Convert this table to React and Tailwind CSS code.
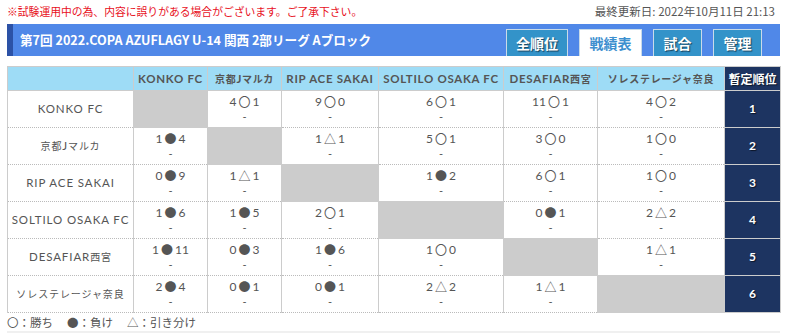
import React from "react";

const teams = [
  "KONKO FC",
  "京都Jマルカ",
  "RIP ACE SAKAI",
  "SOLTILO OSAKA FC",
  "DESAFIAR西宮",
  "ソレステレージャ奈良",
];

const results = [
  [null, "4〇1", "9〇0", "6〇1", "11〇1", "4〇2"],
  ["1●4", null, "1△1", "5〇1", "3〇0", "1〇0"],
  ["0●9", "1△1", null, "1●2", "6〇1", "1〇0"],
  ["1●6", "1●5", "2〇1", null, "0●1", "2△2"],
  ["1●11", "0●3", "1●6", "1〇0", null, "1△1"],
  ["2●4", "0●1", "0●1", "2△2", "1△1", null],
];

const widths = [126, 74, 74, 97, 125, 94, 127, 56];

const tableFont = { fontFamily: "Lato, 'Noto Sans CJK JP', sans-serif" };
const jpFont = { fontFamily: "'Noto Sans CJK JP', sans-serif" };

function Mixed({ text }) {
  const parts = text.split(/([\u3000-\u9fff\uff00-\uffef]+)/).filter(Boolean);
  return (
    <>
      {parts.map((p, i) =>
        /[\u3000-\u9fff\uff00-\uffef]/.test(p) ? (
          <span key={i} className="text-[10px]" style={jpFont}>{p}</span>
        ) : (
          <span key={i}>{p}</span>
        )
      )}
    </>
  );
}

function Score({ s }) {
  const m = s.match(/^(\d+)(.)(\d+)$/);
  return (
    <div className="flex flex-col items-center">
      <div className="flex items-center h-[14px] text-[12px] leading-[14px] text-[#555]">
        <span>{m[1]}</span>
        <span className="text-[12px] leading-[12px] mx-[2px]" style={jpFont}>{m[2]}</span>
        <span>{m[3]}</span>
      </div>
      <div className="mt-[2px] h-[12px] text-[11px] leading-[12px] text-[#555]">-</div>
    </div>
  );
}

const btn = "h-[27px] flex items-center justify-center border border-[#c9dbe8] border-b-0 font-bold text-[14px]";
const btnBlue = btn + " bg-[#3393c9] text-white [text-shadow:1px_1px_1px_rgba(0,0,0,0.55)]";

export default function App() {
  return (
    <div className="w-[790px] h-[333px] bg-white overflow-hidden" style={jpFont}>
      <div className="ml-[7px] w-[773px]">
        <div className="flex items-center justify-between h-[24px] pb-[1px]">
          <span className="text-[10.8px] text-[#e8101c]">※試験運用中の為、内容に誤りがある場合がございます。ご了承下さい。</span>
          <span className="text-[11.5px] text-[#555] pr-[5px]">最終更新日: 2022年10月11日 21:13</span>
        </div>
        <div className="flex items-end justify-between h-[32px] bg-[#5088e8] border-l-[6px] border-[#2c52a6] pr-[18px]">
          <div className="self-center pl-[7px] text-white font-bold text-[12.6px]">
            第7回 2022.COPA AZUFLAGY U-14 関西 2部リーグ Aブロック
          </div>
          <div className="flex gap-[11px]">
            <div className={btnBlue + " w-[62px]"}>全順位</div>
            <div className={btn + " w-[63px] bg-white text-[#3d8fcf]"}>戦績表</div>
            <div className={btnBlue + " w-[49px]"}>試合</div>
            <div className={btnBlue + " w-[49px]"}>管理</div>
          </div>
        </div>
        <table className="mt-[10px] w-[773px] table-fixed border-collapse" style={tableFont}>
          <colgroup>
            {widths.map((w, i) => (
              <col key={i} style={{ width: w }} />
            ))}
          </colgroup>
          <thead>
            <tr className="h-[24px]">
              <th className="bg-[#9edcf6] border border-[#cccccc]"></th>
              {teams.map((t) => (
                <th key={t} className="bg-[#9edcf6] border border-[#cccccc] text-[11.5px] font-bold text-[#555] tracking-[0.7px] whitespace-nowrap px-0">
                  <Mixed text={t} />
                </th>
              ))}
              <th className="bg-[#1d3461] border border-[#cccccc] text-[12px] font-bold text-white [text-shadow:1px_1px_1px_rgba(0,0,0,0.6)]" style={jpFont}>暫定順位</th>
            </tr>
          </thead>
          <tbody>
            {teams.map((t, r) => (
              <tr key={t} className="h-[37px]">
                <td className="border-x border-x-[#cccccc] border-y border-y-[#bbbbbb] border-dotted [border-left-style:solid] [border-right-style:solid] text-center text-[11.5px] text-[#555] tracking-[0.9px] whitespace-nowrap">
                  <Mixed text={t} />
                </td>
                {results[r].map((s, c) =>
                  s === null ? (
                    <td key={c} className="bg-[#cccccc] border border-[#cccccc]"></td>
                  ) : (
                    <td key={c} className="border-x border-x-[#cccccc] border-y border-y-[#bbbbbb] border-dotted [border-left-style:solid] [border-right-style:solid] text-center align-middle">
                      <Score s={s} />
                    </td>
                  )
                )}
                <td className="bg-[#1d3461] border border-[#cccccc] text-center text-white font-bold text-[12px] [text-shadow:1px_1px_1px_rgba(0,0,0,0.6)]">
                  {r + 1}
                </td>
              </tr>
            ))}
          </tbody>
        </table>
        <div className="h-[18px] flex items-center text-[11.5px] text-[#555] gap-[14px] pt-[1px]">
          <span>〇：勝ち</span>
          <span>●：負け</span>
          <span>△：引き分け</span>
        </div>
        <div className="h-[10px] bg-[#f0f0f0]"></div>
      </div>
    </div>
  );
}
